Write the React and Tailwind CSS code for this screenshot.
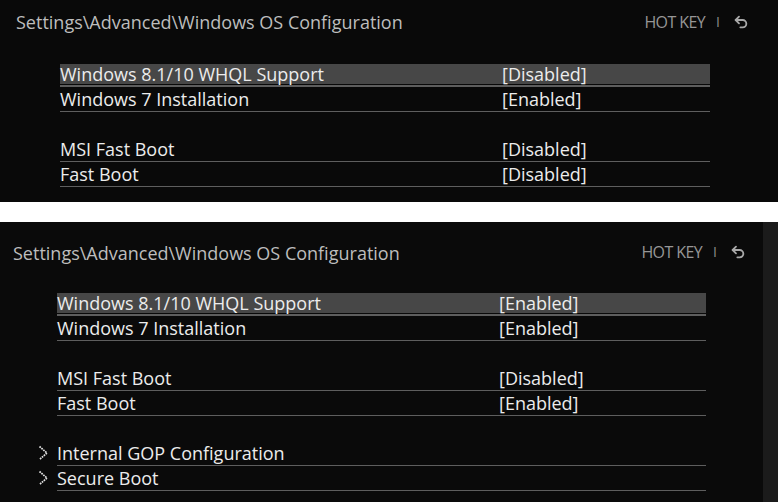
import { Undo2 } from "lucide-react";

const font = { fontFamily: '"Open Sans", "Noto Sans", sans-serif' };

function Chevron() {
  return (
    <svg width="11" height="16" viewBox="0 0 11 16" className="absolute left-[-19px] top-[2px]">
      <polyline points="1.5,1.5 9,8 1.5,14.5" fill="none" stroke="#e0e0e0" strokeWidth="1.7" strokeDasharray="1.7 0.8" />
    </svg>
  );
}

function Row({ label, value, active, sub }) {
  return (
    <div className={`h-[25px] pt-[2px] border-[#5e5e5e] ${active ? "border-b-2" : "border-b"}`}>
      <div className={`relative h-[20px] grid grid-cols-[442px_1fr] items-center text-[18px] leading-[20px] text-[#ececec] ${active ? "bg-[#474747]" : ""}`}>
        {sub && <Chevron />}
        <span className="whitespace-nowrap">{label}</span>
        <span className="whitespace-nowrap">{value}</span>
      </div>
    </div>
  );
}

function Header({ left, top, hotRight, hotTop }) {
  return (
    <div className="flex justify-between">
      <div className={`text-[18px] leading-[24px] text-[#bdbdbd] whitespace-nowrap ${left} ${top}`}>
        Settings\Advanced\Windows OS Configuration
      </div>
      <div className={`flex items-center text-[16px] leading-[20px] text-[#969696] ${hotRight} ${hotTop}`}>
        <span className="tracking-[-0.6px]">HOT KEY</span>
        <span className="ml-[11px] text-[14px] text-[#8a8a8a]">I</span>
        <Undo2 size={16} strokeWidth={2.75} className="ml-[13px] text-[#a8a8a8]" />
      </div>
    </div>
  );
}

export default function App() {
  return (
    <div className="w-[778px] h-[502px] bg-white overflow-hidden" style={font}>
      {/* before */}
      <div className="h-[202px] bg-[#090909]">
        <Header left="ml-[16px]" top="pt-[10px]" hotRight="mr-[29px]" hotTop="pt-[10px]" />
        <div className="ml-[60px] w-[650px] mt-[28px]">
          <Row label="Windows 8.1/10 WHQL Support" value="[Disabled]" active />
          <Row label="Windows 7 Installation" value="[Enabled]" />
          <div className="h-[25px]" />
          <Row label="MSI Fast Boot" value="[Disabled]" />
          <Row label="Fast Boot" value="[Disabled]" />
        </div>
      </div>

      <div className="h-[20px]" />

      {/* after */}
      <div className="h-[280px] flex bg-[#0a0a0a]">
        <div className="flex-1">
          <Header left="ml-[13px]" top="pt-[19px]" hotRight="mr-[17px]" hotTop="pt-[17px]" />
          <div className="ml-[57px] w-[649px] mt-[26px]">
            <Row label="Windows 8.1/10 WHQL Support" value="[Enabled]" active />
            <Row label="Windows 7 Installation" value="[Enabled]" />
            <div className="h-[25px]" />
            <Row label="MSI Fast Boot" value="[Disabled]" />
            <Row label="Fast Boot" value="[Enabled]" />
            <div className="h-[25px]" />
            <Row label="Internal GOP Configuration" sub />
            <Row label="Secure Boot" sub />
          </div>
        </div>
        <div className="w-[15px] bg-[#1b1b1b]" />
      </div>
    </div>
  );
}
